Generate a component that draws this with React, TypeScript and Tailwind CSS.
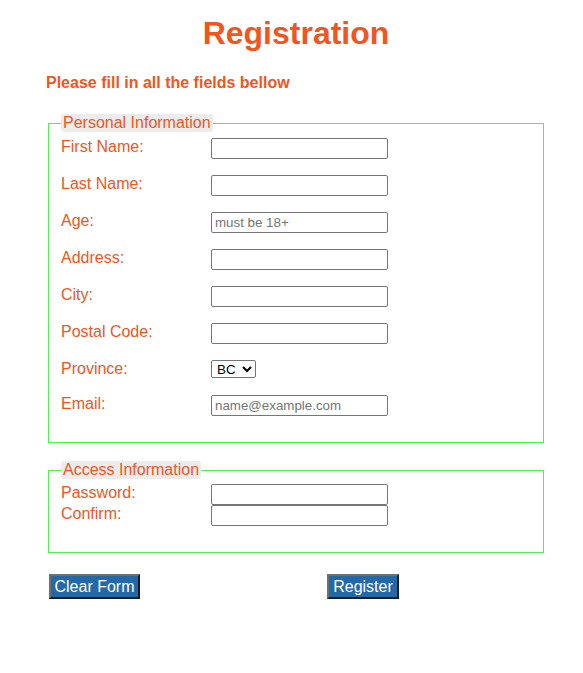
import React from 'react';

const labelCls = 'w-[150px] shrink-0 text-[16px] leading-[17px] text-[#f0561e]';
const inputCls =
  'w-[177px] h-[21px] border border-[#767676] rounded-[2px] bg-white px-[3px] text-[13.33px] text-black placeholder:text-[#757575] outline-none';
const legendCls = 'ml-0 px-0.5 bg-[#ececec] rounded-[3px] text-[16px] leading-[18px] text-[#f0561e]';
const buttonCls =
  'border-2 border-t-[#707070] border-l-[#707070] border-r-[#1c1c1c] border-b-[#1c1c1c] bg-[#2369a8] px-0 py-px text-center text-[16px] leading-[19px] text-white';

const Row: React.FC<{ label: string; placeholder?: string; type?: string }> = ({ label, placeholder, type = 'text' }) => (
  <div className="flex items-start">
    <label className={labelCls}>{label}</label>
    <input type={type} placeholder={placeholder} className={inputCls} />
  </div>
);

const App: React.FC = () => {
  return (
    <div className="min-h-[673px] bg-white font-['Liberation_Sans',Arial,sans-serif]">
      <form className="ml-[46px] w-[500px] pt-[15px]" onSubmit={(e) => e.preventDefault()}>
        <h1 className="text-center text-[32px] leading-[37px] font-bold text-[#f0561e]">Registration</h1>
        <p className="mt-[22px] text-[16px] leading-[18px] font-bold text-[#f0561e]">Please fill in all the fields bellow</p>

        {/* Personal Information */}
        <fieldset className="mx-[2px] mt-[22px] border border-[#55ee55] px-3 pt-[6px] pb-[26px]">
          <legend className={legendCls}>Personal Information</legend>
          <div className="flex flex-col gap-4">
            <Row label="First Name:" />
            <Row label="Last Name:" />
            <Row label="Age:" placeholder="must be 18+" />
            <Row label="Address:" />
            <Row label="City:" />
            <Row label="Postal Code:" />
            <div className="flex items-start h-[19px]">
              <label className={labelCls}>Province:</label>
              <select
                defaultValue="BC"
                className="w-[45px] h-[18px] border border-[#767676] rounded-[2px] bg-white pl-px text-[13.33px] text-black"
              >
                <option>AB</option>
                <option>BC</option>
                <option>MB</option>
                <option>NB</option>
                <option>NL</option>
                <option>NS</option>
                <option>ON</option>
                <option>PE</option>
                <option>QC</option>
                <option>SK</option>
              </select>
            </div>
            <Row label="Email:" type="email" placeholder="name@example.com" />
          </div>
        </fieldset>

        {/* Access Information */}
        <fieldset className="mx-[2px] mt-[18px] border border-[#55ee55] px-3 pt-[5px] pb-[26px]">
          <legend className={legendCls}>Access Information</legend>
          <div className="flex flex-col">
            <Row label="Password:" type="password" />
            <Row label="Confirm:" type="password" />
          </div>
        </fieldset>

        <div className="mt-[21px] flex items-start">
          <button type="reset" className={`ml-[3px] w-[91px] ${buttonCls}`}>Clear Form</button>
          <button type="submit" className={`ml-[187px] w-[72px] ${buttonCls}`}>Register</button>
        </div>
      </form>
    </div>
  );
};

export default App;
